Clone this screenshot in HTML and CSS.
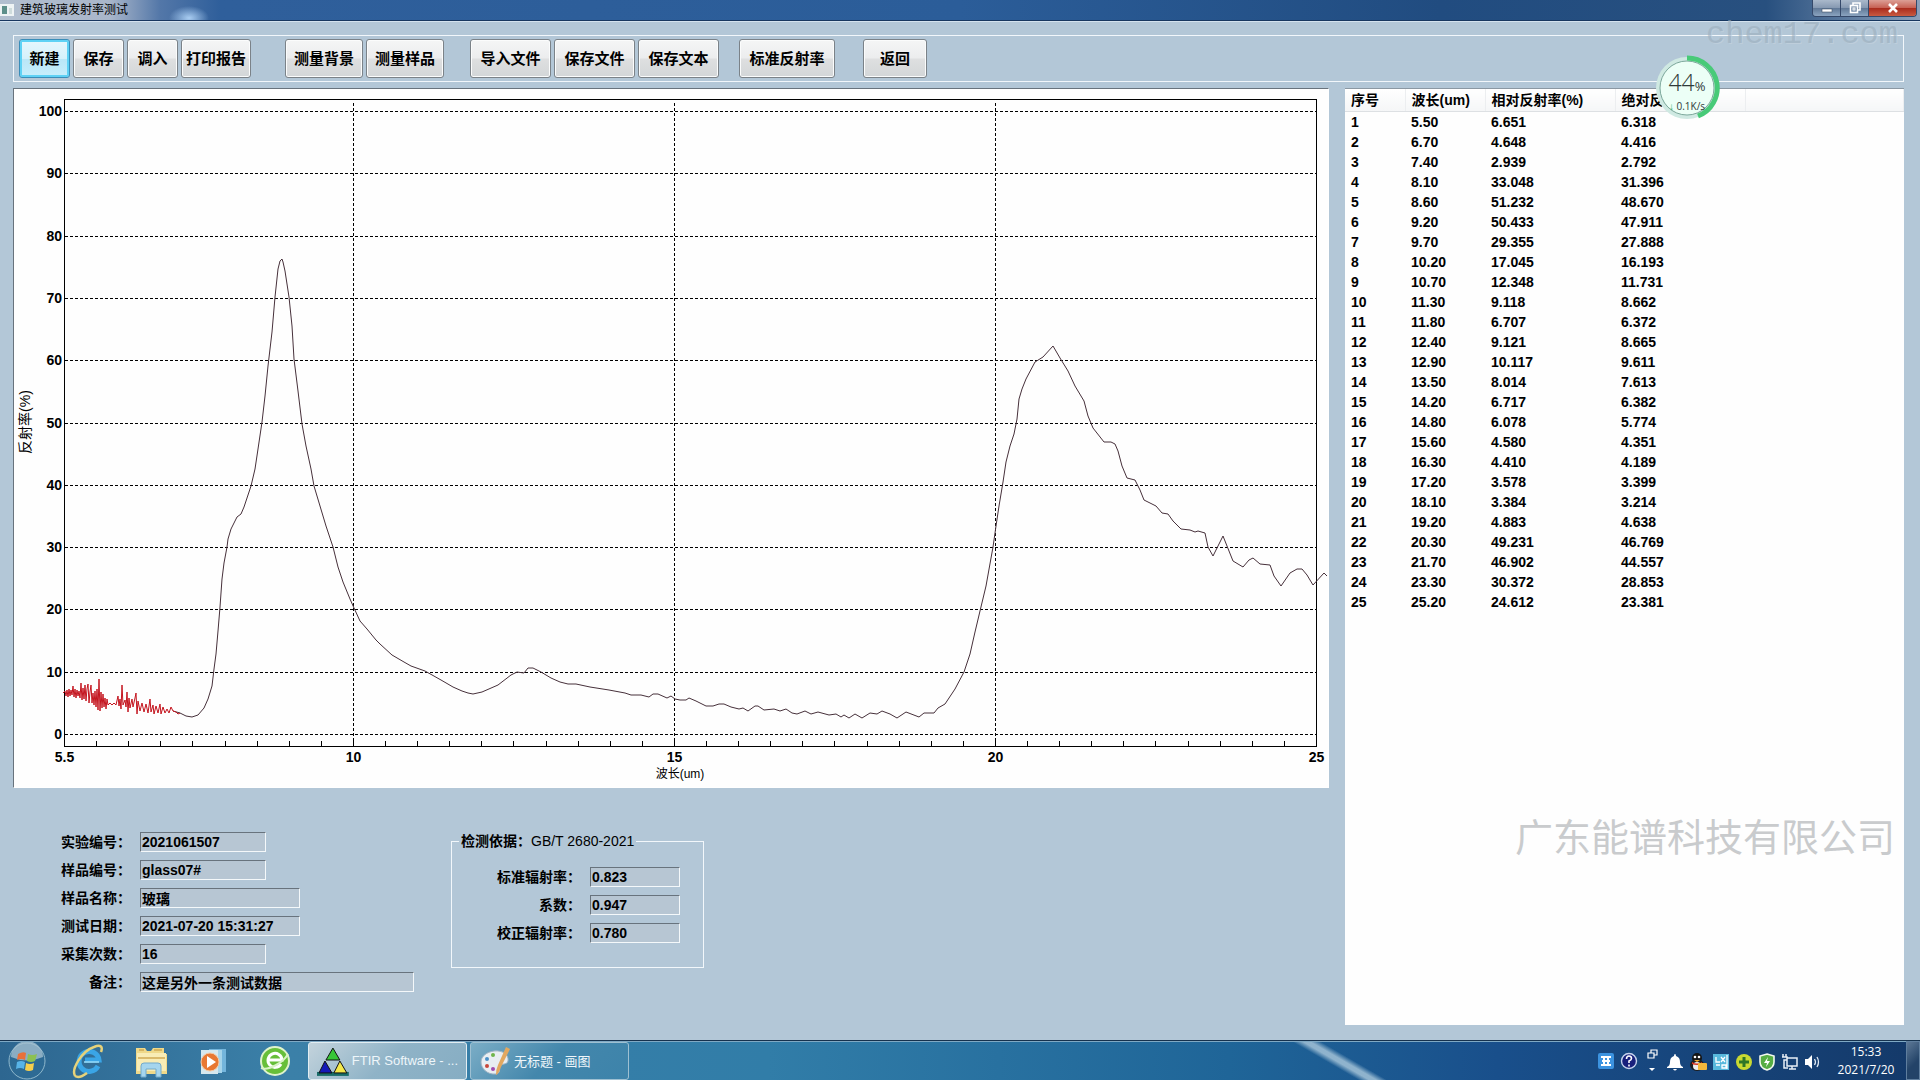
FILE: index.html
```html
<!DOCTYPE html>
<html lang="zh-CN">
<head>
  <meta charset="UTF-8">
  <meta name="viewport" content="width=device-width, initial-scale=1.0">
  <title>建筑玻璃发射率测试</title>
  <link rel="stylesheet" href="styles.css">
</head>
<body>

  <header class="titlebar">
    <svg class="app-icon" viewBox="0 0 14 14" width="14" height="14">
      <rect x="0" y="1" width="14" height="12" fill="#eef3f4"/>
      <rect x="2" y="3" width="5" height="8" fill="#5d8f8a"/>
      <rect x="9" y="5" width="3" height="6" fill="#cfdcdc"/>
    </svg>
    <h1 class="title">建筑玻璃发射率测试</h1>
    <div class="window-btns">
      <button class="win-btn" aria-label="最小化">
        <svg viewBox="0 0 12 12" width="12" height="12"><rect x="1" y="7" width="10" height="3" fill="#fff" stroke="#44546a" stroke-width=".6"/></svg>
      </button>
      <button class="win-btn" aria-label="还原">
        <svg viewBox="0 0 12 12" width="12" height="12" fill="none" stroke="#fff" stroke-width="1.6"><path d="M4 3V1h7v7H9"/><rect x="1.5" y="3.5" width="7" height="7"/><rect x="4" y="6" width="2" height="2" stroke-width="1"/></svg>
      </button>
      <button class="win-btn win-close" aria-label="关闭">
        <svg viewBox="0 0 12 12" width="12" height="12"><path d="M2 2l8 8M10 2l-8 8" stroke="#fff" stroke-width="2.6"/></svg>
      </button>
    </div>
  </header>

  <main class="app">
    <nav class="toolbar">
      <div class="group">
        <button class="btn active">新建</button>
        <button class="btn">保存</button>
        <button class="btn">调入</button>
        <button class="btn btn-print">打印报告</button>
      </div>
      <div class="group group-measure">
        <button class="btn btn-measure">测量背景</button>
        <button class="btn btn-measure">测量样品</button>
      </div>
      <div class="group group-file">
        <button class="btn btn-file">导入文件</button>
        <button class="btn btn-file">保存文件</button>
        <button class="btn btn-file">保存文本</button>
      </div>
      <div class="group group-std">
        <button class="btn btn-std">标准反射率</button>
      </div>
      <div class="group group-back">
        <button class="btn btn-back">返回</button>
      </div>
    </nav>

    <div class="content">
      <section class="left">
        <div class="chart-panel">
          <svg class="chart" viewBox="14 90 1314 698">
            <g id="grid"></g>
            <rect class="frame" x="64.5" y="100.5" width="1252" height="647"/>
            <path class="curve" d="M173 712L180 714 186 717 192 718 198 716 204 709 208 700 212 687 214 670 216 655 218 632 220 608 222 580 224 564 227 548 228 540 231 530 237 518 241 515 244 508 251 487 255 470 258 450 262 423 265 397 268 367 272 333 275 298 278 270 280 262 282 260 283 263 285 272 289 298 292 327 294 360 298 392 302 425 306 447 311 470 314 487 320 507 326 527 333 548 338 568 343 583 350 600 354 609 360 622 367 630 376 641 380 645 392 656 404 663 411 667 425 672 441 681 453 688 462 692 468 694 473 695 482 693 498 686 511 676 517 673 524 674 528 669 533 669 541 673 551 679 560 683 568 685 576 685 590 688 609 691 625 694 631 696 641 696 649 698 653 695 658 695 667 699 671 697 675 700 680 701 686 701 689 699 696 702 706 707 713 707 719 705 724 705 731 708 739 710 743 709 748 712 755 707 758 707 764 711 774 710 780 712 786 710 792 714 797 715 805 712 811 715 818 713 829 716 836 715 841 718 844 716 849 719 855 715 862 719 870 714 877 715 882 712 890 715 897 719 906 713 919 718 924 714 934 714 938 709 945 705 955 690 964 673 970 655 975 633 980 612 986 587 993 548 996 527 999 507 1003 483 1006 463 1010 447 1014 435 1017 420 1019 400 1022 390 1026 380 1035 363 1043 358 1053 347 1060 359 1068 372 1075 387 1084 402 1088 417 1093 429 1104 443 1111 443 1115 445 1118 452 1122 467 1127 479 1135 481 1140 491 1144 501 1156 507 1162 514 1168 515 1173 522 1181 530 1190 531 1195 533 1198 532 1205 534 1208 548 1213 557 1223 537 1233 562 1243 568 1249 561 1253 559 1260 565 1270 566 1274 577 1281 587 1290 574 1297 570 1302 570 1307 576 1313 586 1324 574 1327 577"/>
            <path class="noise" d="M63 694L65 692 66 697 67 691 68 698 69 690 70 697 71 691 72 696 73 687 74 698 75 690 76 699 77 691 78 697 79 692 80 699 81 684 82 701 83 689 84 700 85 686 86 702 87 690 88 685 89 704 90 693 91 686 92 704 93 694 94 706 95 692 96 708 97 690 98 711 99 680 100 712 101 693 102 709 103 695 104 708 105 699 106 710 107 700 108 706 110 704 112 706 114 704 116 706 118 697 119 707 120 700 121 710 122 686 123 706 125 701 126 708 127 693 128 713 129 699 130 709 132 700 133 708 135 699 136 694 137 715 138 702 140 712 142 704 144 713 146 705 148 714 150 700 151 713 153 706 154 715 156 707 158 714 160 705 161 715 163 708 165 714 167 710 169 714 171 708 173 712 176 713 178 715 180 714"/>
            <text class="axis-title" x="680" y="779">波长(um)</text>
            <text class="axis-title axis-title-y" transform="translate(30 423) rotate(-90)">反射率(%)</text>
          </svg>
        </div>

        <div class="info">
          <form class="form">
            <div class="row"><label for="exp-no">实验编号：</label><input class="field" id="exp-no" value="2021061507"></div>
            <div class="row"><label for="sample-no">样品编号：</label><input class="field" id="sample-no" value="glass07#"></div>
            <div class="row"><label for="sample-name">样品名称：</label><input class="field field-mid" id="sample-name" value="玻璃"></div>
            <div class="row"><label for="test-date">测试日期：</label><input class="field field-mid" id="test-date" value="2021-07-20 15:31:27"></div>
            <div class="row"><label for="times">采集次数：</label><input class="field" id="times" value="16"></div>
            <div class="row"><label for="remark">备注：</label><input class="field field-long" id="remark" value="这是另外一条测试数据"></div>
          </form>

          <fieldset class="result">
            <legend>检测依据：<span class="standard">GB/T 2680-2021</span></legend>
            <div class="row"><label for="std-emi">标准辐射率：</label><input class="field field-short" id="std-emi" value="0.823"></div>
            <div class="row"><label for="factor">系数：</label><input class="field field-short" id="factor" value="0.947"></div>
            <div class="row"><label for="cor-emi">校正辐射率：</label><input class="field field-short" id="cor-emi" value="0.780"></div>
          </fieldset>
        </div>
      </section>

      <section class="table-panel">
        <table class="data">
          <colgroup><col class="col-no"><col class="col-wave"><col class="col-rel"><col class="col-abs"><col></colgroup>
          <thead>
            <tr><th>序号</th><th>波长(um)</th><th>相对反射率(%)</th><th>绝对反</th><th></th></tr>
          </thead>
          <tbody id="rows"></tbody>
        </table>
        <div class="company">广东能谱科技有限公司</div>
      </section>
    </div>
  </main>

  <div class="site-mark">chem17.com</div>

  <div class="speed">
    <svg class="speed-ring" viewBox="0 0 66 66">
      <circle cx="33" cy="33" r="31" fill="#cfe9e2"/>
      <circle cx="33" cy="33" r="27" fill="#ecfff6" stroke="#7ca79b" stroke-width="1"/>
      <path d="M33 3A30 30 0 0 1 44 61" fill="none" stroke="#48ca78" stroke-width="5"/>
    </svg>
    <div class="speed-num">44<small>%</small></div>
    <div class="speed-net"><span class="arrow">↓</span> 0.1K/s</div>
  </div>

  <footer class="taskbar">
    <div class="launch">
      <button class="task-icon" aria-label="开始">
        <svg viewBox="0 0 38 38" width="38" height="38">
          <circle cx="19" cy="19" r="18" fill="#2d6a94" stroke="#8fb8cc"/>
          <path d="M3 15a16 16 0 0 1 32 0q-16 7-32 0z" fill="#a9c4d3" opacity=".75"/>
          <path d="M10 12q5-3 8-1l-1 7q-4-2-8 0z" fill="#e8703a"/>
          <path d="M20 12q4 2 9 0l-2 7q-4 2-8 0z" fill="#8cc152"/>
          <path d="M9 20q4-2 8 0l-1 7q-4-2-8 0z" fill="#58b4e8"/>
          <path d="M18 21q4 2 8 0l-1 7q-4 2-8 0z" fill="#f6cf4c"/>
        </svg>
      </button>
      <button class="task-icon" aria-label="Internet Explorer">
        <svg viewBox="0 0 38 38" width="38" height="38">
          <path d="M28 24a10 10 0 1 1 1-6H15" fill="none" stroke="#3aa5e6" stroke-width="5"/>
          <path d="M14 20h15" stroke="#9adcf8" stroke-width="1.5"/>
          <path d="M5 34C1 27 12 9 24 5c7-3 9 0 7 5M5 34c3 2 8 0 12-3" fill="none" stroke="#e6d27a" stroke-width="2.5"/>
        </svg>
      </button>
      <button class="task-icon" aria-label="资源管理器">
        <svg viewBox="0 0 38 38" width="38" height="38">
          <path d="M4 6h9l2 3h4l2-3h11v6h3v20H4z" fill="#efd98a"/>
          <path d="M5 11h29v18H5z" fill="#f8ecb5"/>
          <path d="M6 16h27M7 8h5M22 8h8" stroke="#cfa954" stroke-width="1.5"/>
          <path d="M9 35V24q0-3 3-3h14q3 0 3 3v11h-5v-8H14v8z" fill="#a5d5ee" stroke="#72aacb"/>
        </svg>
      </button>
      <button class="task-icon" aria-label="媒体播放器">
        <svg viewBox="0 0 38 38" width="38" height="38">
          <path d="M15 7h17v23H15z" fill="#73b5dc"/>
          <path d="M11 8h17v23H11z" fill="#a5d4ea"/>
          <path d="M7 8h17v24H7z" fill="#d6e8ee"/>
          <circle cx="16" cy="20" r="9" fill="#e87832" stroke="#f5c9a2"/>
          <path d="M13 14l9 6-9 6z" fill="#fff"/>
        </svg>
      </button>
      <button class="task-icon" aria-label="360浏览器">
        <svg viewBox="0 0 38 38" width="38" height="38">
          <circle cx="19" cy="19" r="14" fill="#67bf3a" stroke="#dff3cd" stroke-width="2"/>
          <path d="M25 22a7 7 0 1 1 1-4H13" fill="none" stroke="#fff" stroke-width="3"/>
          <path d="M5 26C12 29 27 21 32 12" fill="none" stroke="#d9f3c6" stroke-width="2"/>
        </svg>
      </button>
    </div>

    <button class="task active-task">
      <svg viewBox="0 0 32 30" width="32" height="30">
        <path d="M0 26h32v4H0z" fill="#176b67"/>
        <path d="M16 2l7 12H9z" fill="#37c637" stroke="#111"/>
        <path d="M8 15l7 12H2z" fill="#1418b8" stroke="#111"/>
        <path d="M23 15l7 12H17z" fill="#f4e84a" stroke="#111"/>
      </svg>
      <span>FTIR Software - ...</span>
    </button>
    <button class="task">
      <svg viewBox="0 0 32 30" width="32" height="30">
        <path d="M15 5c9-1 15 4 14 10-1 4-6 2-8 5-1 3 1 7-4 8C8 29 2 22 2 16S8 6 15 5z" fill="#e8eef2" stroke="#9fb4c4"/>
        <circle cx="8" cy="13" r="2" fill="#4a90c8"/><circle cx="14" cy="9" r="2" fill="#6fb54c"/><circle cx="8" cy="20" r="2" fill="#c8473a"/><circle cx="14" cy="23" r="2" fill="#a04cb0"/>
        <path d="M27 1l4 2-9 18q-3 8-5 8 0-6 2-10z" fill="#e2a860"/>
      </svg>
      <span>无标题 - 画图</span>
    </button>

    <div class="tray">
      <svg viewBox="0 0 18 18" width="18" height="18"><rect x="1" y="1" width="16" height="16" rx="2" fill="#3c93e0"/><path d="M4 5h10M4 13h10M5 9h8M7 5v8M11 5v8" stroke="#fff" stroke-width="2"/></svg>
      <svg viewBox="0 0 18 18" width="18" height="18"><circle cx="9" cy="9" r="7.5" fill="#18207c" stroke="#c8d4ee" stroke-width="1.4"/><path d="M6.5 7q0-3 2.5-3t2.5 2.5Q11.5 8 9 9v2M9 12.5v2" fill="none" stroke="#fff" stroke-width="1.6"/></svg>
      <svg viewBox="0 0 18 26" width="18" height="26"><path d="M8 5V2h6v5h-3M5 5h6v5H5z" fill="none" stroke="#fff" stroke-width="1.2"/><path d="M6 20h6l-3 3z" fill="#fff"/></svg>
      <svg class="low" viewBox="0 0 18 18" width="18" height="18"><path d="M9 1q1 0 1 2c3 1 4 3 4 6q0 4 3 5v1H1v-1q3-1 3-5c0-3 1-5 4-6q0-2 1-2zM7 16h4q-2 3-4 0z" fill="#fff"/></svg>
      <svg class="low" viewBox="0 0 18 18" width="18" height="18"><ellipse cx="8" cy="5" rx="5" ry="5" fill="#151515"/><ellipse cx="8" cy="12" rx="7" ry="6" fill="#1d1d1d"/><ellipse cx="8" cy="13" rx="4" ry="4" fill="#eee"/><path d="M3 9q5 3 10 0v2q-5 2-10 0z" fill="#d8331f"/><circle cx="6" cy="4" r="1.3" fill="#fff"/><circle cx="10" cy="4" r="1.3" fill="#fff"/><path d="M5 7h6l-3 2z" fill="#f0a828"/><rect x="9" y="10" width="9" height="7" rx="1" fill="#f4b83c"/></svg>
      <svg class="low" viewBox="0 0 18 18" width="18" height="18"><rect x="1" y="1" width="16" height="16" fill="#58b8dc"/><path d="M4 4v5h4M9 4l4 5M13 4l-4 5M4 12h4M10 12h4v3h-4zM15 2v14" stroke="#fff" stroke-width="1.3" fill="none"/></svg>
      <svg class="low" viewBox="0 0 18 18" width="18" height="18"><circle cx="9" cy="9" r="8" fill="#c9d932"/><path d="M9 4v10M4 9h10" stroke="#2f7626" stroke-width="3"/></svg>
      <svg class="low" viewBox="0 0 18 18" width="18" height="18"><path d="M9 1l7 2v6q0 6-7 8-7-2-7-8V3z" fill="#56ad43" stroke="#f2f8ee" stroke-width="1.6"/><path d="M10 4L6 10h3l-1 4 4-6H9z" fill="#fff"/></svg>
      <svg class="low" viewBox="0 0 18 18" width="18" height="18"><path d="M6 5h10v8H6zM8 16h7M11 13v3M2 1v3M5 1v3M1 4h5v3H3v8h4" fill="none" stroke="#e8eef6" stroke-width="1.5"/></svg>
      <svg class="low" viewBox="0 0 18 18" width="18" height="18"><path d="M1 6h3l4-4v14l-4-4H1z" fill="#fff"/><path d="M10.5 6q2 3 0 6M13 4q3 5 0 10" fill="none" stroke="#dfe8f2" stroke-width="1.3"/></svg>
    </div>
    <div class="clock"><time>15:33</time><time>2021/7/20</time></div>
    <button class="show-desktop" aria-label="显示桌面"></button>
  </footer>

  <script>
    // 波长, 相对反射率, 绝对反射率
    const data = [
      ['5.50', '6.651', '6.318'], ['6.70', '4.648', '4.416'], ['7.40', '2.939', '2.792'],
      ['8.10', '33.048', '31.396'], ['8.60', '51.232', '48.670'], ['9.20', '50.433', '47.911'],
      ['9.70', '29.355', '27.888'], ['10.20', '17.045', '16.193'], ['10.70', '12.348', '11.731'],
      ['11.30', '9.118', '8.662'], ['11.80', '6.707', '6.372'], ['12.40', '9.121', '8.665'],
      ['12.90', '10.117', '9.611'], ['13.50', '8.014', '7.613'], ['14.20', '6.717', '6.382'],
      ['14.80', '6.078', '5.774'], ['15.60', '4.580', '4.351'], ['16.30', '4.410', '4.189'],
      ['17.20', '3.578', '3.399'], ['18.10', '3.384', '3.214'], ['19.20', '4.883', '4.638'],
      ['20.30', '49.231', '46.769'], ['21.70', '46.902', '44.557'], ['23.30', '30.372', '28.853'],
      ['25.20', '24.612', '23.381']
    ];

    document.getElementById('rows').innerHTML = data.map((row, i) =>
      `<tr><td>${i + 1}</td><td>${row[0]}</td><td>${row[1]}</td><td>${row[2]}</td><td></td></tr>`
    ).join('');

    // Chart grid, ticks and axis labels
    const xPos = um => Math.round(64 + (um - 5.5) * 64.2) + 0.5;
    const yPos = pct => Math.round(735 - pct * 6.23) + 0.5;
    let grid = '';

    for (let p = 0; p <= 100; p += 10) {
      grid += `<path class="dash" d="M65 ${yPos(p)}H1316"/>`;
      grid += `<text class="tick-label y-label" x="62" y="${yPos(p) + 4.5}">${p}</text>`;
    }
    for (let um = 6; um < 25; um += 0.5) {
      grid += `<path class="tick" d="M${xPos(um)} 742V747"/>`;
    }
    [10, 15, 20].forEach(um => {
      grid += `<path class="dash" d="M${xPos(um)} 104V747"/>`;
    });
    [5.5, 10, 15, 20, 25].forEach(um => {
      grid += `<text class="tick-label" x="${xPos(um)}" y="763">${um}</text>`;
    });
    document.getElementById('grid').innerHTML = grid;
  </script>

</body>
</html>
```
FILE: styles.css
```css
* {
  box-sizing: border-box;
}

body {
  margin: 0;
  min-height: 100vh;
  display: flex;
  flex-direction: column;
  position: relative;
  overflow-x: hidden;
  background: #b3c7d7;
  color: #000;
  font-family: "Liberation Sans", "Noto Sans CJK SC", sans-serif;
  font-size: 14px;
}

button,
input {
  font: inherit;
  color: inherit;
}

/* title bar */
.titlebar {
  display: flex;
  align-items: center;
  height: 21px;
  border-bottom: 1px solid #17375f;
  background:
    radial-gradient(ellipse 20px 12px at 189px 18px, #a9cdf2, transparent),
    linear-gradient(90deg, #b2bfcf 0, #a9b6ca 110px, #5377a8 160px, #2f5f9b 220px, #2b5d99 50%, #214c80 75%, #28507f 92%, #8ba0bb 100%);
}

.title {
  flex: 1;
  margin: 0 0 0 6px;
  font-size: 12px;
  line-height: 20px;
  font-weight: normal;
}

.window-btns {
  display: flex;
  align-self: flex-start;
  margin-right: 3px;
  border: 1px solid #35496a;
  border-top: 0;
  border-radius: 0 0 4px 4px;
  overflow: hidden;
}

.win-btn {
  display: flex;
  align-items: center;
  justify-content: center;
  width: 28px;
  height: 16px;
  padding: 0;
  border: 0;
  border-right: 1px solid #35496a;
  background: linear-gradient(#aab9cb, #8598b1 50%, #5f7795 50%, #8ba4c0);
}

.win-close {
  width: 47px;
  border-right: 0;
  background: linear-gradient(#dc9f96, #c65f52 50%, #a92a1c 50%, #c95a40);
}

/* toolbar */
.app {
  flex: 1;
  display: flex;
  flex-direction: column;
  padding: 13px 16px 15px 13px;
  border-top: 1px solid #d4e2ee;
}

.toolbar {
  display: flex;
  padding: 3px 5px;
  border: 1px solid #f2f7fb;
}

.group {
  display: flex;
  gap: 3px;
}

.group-measure {
  margin-left: 34px;
}

.group-file {
  margin-left: 26px;
}

.group-std {
  margin-left: 20px;
}

.group-back {
  margin-left: 28px;
}

.btn {
  width: 51px;
  height: 39px;
  padding: 0 0 2px;
  border: 1px solid #7b8288;
  border-radius: 3px;
  background: linear-gradient(#f5f6f6, #ecedee 48%, #dedfe0 52%, #d3d6d8);
  box-shadow: inset 0 0 0 1px #fbfcfc;
  font-size: 15px;
  font-weight: bold;
}

.btn.active {
  border-color: #3a8db8;
  background: linear-gradient(#e6f7fd, #d5f1fb 50%, #b9e6f7 50%, #c8effc);
  box-shadow: inset 0 0 0 2px #5fd2f5;
}

.btn-print {
  width: 70px;
}

.btn-measure {
  width: 78px;
}

.btn-file {
  width: 81px;
}

.btn-std {
  width: 96px;
}

.btn-back {
  width: 64px;
}

/* chart and table */
.content {
  flex: 1;
  display: grid;
  grid-template-columns: 1316fr 559fr;
  gap: 16px;
  margin-top: 6px;
}

.chart-panel {
  border: 1px solid #fff;
  border-top-color: #68737d;
  border-left-color: #68737d;
  background: #fefefe;
}

.chart {
  display: block;
  width: 100%;
}

.frame {
  fill: none;
  stroke: #000;
  shape-rendering: crispEdges;
}

.dash {
  stroke: #000;
  stroke-dasharray: 3 2;
  shape-rendering: crispEdges;
}

.tick {
  stroke: #000;
  shape-rendering: crispEdges;
}

.curve {
  fill: none;
  stroke: #46303a;
}

.noise {
  fill: none;
  stroke: #c4141e;
}

.tick-label {
  font-size: 14px;
  font-weight: bold;
  text-anchor: middle;
}

.y-label {
  text-anchor: end;
}

.axis-title {
  font-size: 12px;
  text-anchor: middle;
}

.axis-title-y {
  font-size: 14px;
}

.table-panel {
  position: relative;
  border-top: 1px solid #8b98a3;
  background: #fefefe;
}

.data {
  width: 100%;
  table-layout: fixed;
  border-collapse: collapse;
  font-weight: bold;
}

.col-no {
  width: 60px;
}

.col-wave {
  width: 80px;
}

.col-rel,
.col-abs {
  width: 130px;
}

.data th,
.data td {
  padding: 0 0 0 6px;
  line-height: 20px;
  text-align: left;
  white-space: nowrap;
}

.data th {
  height: 22px;
  border-right: 1px solid #eceef0;
  border-bottom: 1px solid #dde0e3;
  background: linear-gradient(#fff, #f5f6f7);
}

.data td {
  height: 20px;
}

.company {
  position: absolute;
  right: 9px;
  bottom: 159px;
  color: #c9cbcd;
  font-size: 38px;
  line-height: 56px;
  white-space: nowrap;
}

/* sample info */
.info {
  display: flex;
  align-items: flex-start;
  gap: 37px;
  padding: 44px 0 0 48px;
}

.form {
  display: flex;
  flex-direction: column;
  gap: 8px;
}

.row {
  display: flex;
  align-items: center;
  gap: 9px;
  height: 20px;
}

.row label {
  width: 70px;
  line-height: 20px;
  font-weight: bold;
  text-align: right;
  white-space: nowrap;
}

.field {
  width: 126px;
  height: 20px;
  padding: 0 1px;
  border: 1px solid #f4f8fa;
  border-top-color: #68737d;
  border-left-color: #68737d;
  background: #b7c6d3;
  font-weight: bold;
}

.field-mid {
  width: 160px;
}

.field-long {
  width: 274px;
}

.field-short {
  width: 90px;
}

.result {
  display: flex;
  flex-direction: column;
  gap: 8px;
  margin: 0;
  padding: 17px 23px 24px 45px;
  border: 1px solid #f2f7fb;
}

.result legend {
  margin-left: -38px;
  padding: 0 2px;
  line-height: 18px;
  font-weight: bold;
}

.result label {
  width: 84px;
}

.standard {
  font-weight: normal;
}

/* things floating over the window */
.site-mark {
  position: absolute;
  top: 16px;
  right: 22px;
  color: #9dafbe;
  font-family: "Liberation Mono", monospace;
  font-size: 32px;
  line-height: 38px;
  text-shadow: 1px 1px 0 #c6d4df;
  opacity: 0.6;
}

.speed {
  position: absolute;
  top: 55px;
  right: 200px;
  width: 66px;
  height: 66px;
  text-align: center;
  color: #2f3a38;
}

.speed-ring {
  position: absolute;
  inset: 0;
}

.speed-num {
  position: relative;
  padding-top: 15px;
  font-family: "Open Sans", sans-serif;
  font-weight: 300;
  font-size: 23px;
  line-height: 24px;
}

.speed-num small {
  font-size: 13px;
  font-weight: 400;
}

.speed-net {
  position: relative;
  font-family: "Open Sans", sans-serif;
  font-size: 10px;
  line-height: 16px;
}

.arrow {
  color: #2fae62;
}

/* taskbar */
.taskbar {
  display: flex;
  align-items: center;
  height: 40px;
  border-top: 1px solid #16324e;
  box-shadow: inset 0 1px 0 #7fa9c4;
  background:
    linear-gradient(30deg, transparent 42%, #8fb3cd 48%, #8fb3cd 52%, transparent 58%) 1285px 0 / 110px 40px no-repeat,
    linear-gradient(90deg, #2d6690, #3b80a8 15%, #317da8 40%, #1f6598 64%, #194f8b 78%, #143969 100%);
  color: #fff;
}

.launch {
  display: flex;
  gap: 24px;
  margin: 0 14px 0 8px;
}

.task-icon {
  display: flex;
  width: 38px;
  height: 38px;
  padding: 0;
  border: 0;
  background: none;
}

.task {
  display: flex;
  align-items: center;
  gap: 3px;
  width: 159px;
  height: 38px;
  margin-right: 3px;
  padding: 0 8px;
  border: 1px solid #9ec0d2;
  border-radius: 3px;
  background: linear-gradient(135deg, #7badc6, #4387ac 50%, #3d83aa);
  color: #eef6fa;
  font-size: 13px;
  white-space: nowrap;
}

.active-task {
  border-color: #e2edf2;
  background: linear-gradient(135deg, #c3d3dc, #8fb3c7 50%, #86adc3);
}

.tray {
  display: flex;
  align-items: center;
  gap: 5px;
  margin-left: auto;
}

.low {
  margin-top: 3px;
}

.clock {
  display: flex;
  flex-direction: column;
  width: 80px;
  margin-left: 4px;
  font-family: "Open Sans", sans-serif;
  font-size: 12px;
  line-height: 18px;
  text-align: center;
}

.show-desktop {
  width: 14px;
  height: 39px;
  padding: 0;
  border: 1px solid #5f7e9e;
  background: linear-gradient(135deg, #5d7896, #234368 60%);
}
```
